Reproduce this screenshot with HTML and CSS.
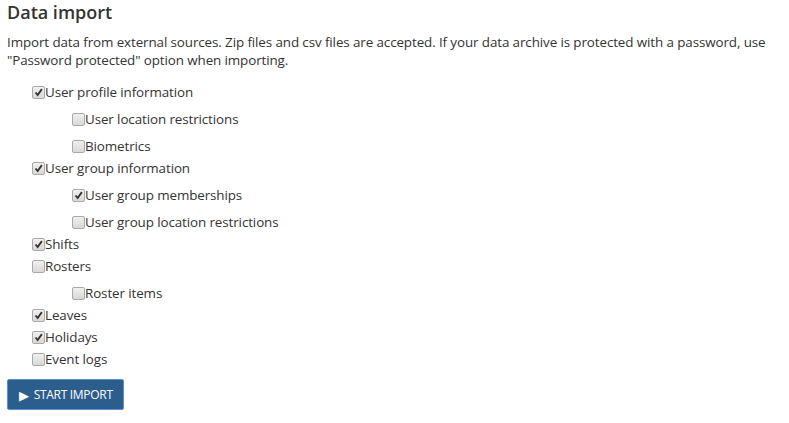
FILE: index.html
```html
<!DOCTYPE html>
<html>
<head>
<meta charset="utf-8">
<link rel="stylesheet" href="styles.css">
</head>
<body>
<div class="page">
  <h1 class="title">Data import</h1>
  <p class="intro">Import data from external sources. Zip files and csv files are accepted. If your data archive is protected with a password, use "Password protected" option when importing.</p>
  <ul class="opts">
    <li class="opt"><label class="row"><span class="box on"><svg viewBox="0 0 13 13"><path d="M3 6.5 L5.5 9.5 L10.5 2.5" /></svg></span>User profile information</label>
      <ul class="sub">
        <li class="opt"><label class="row"><span class="box"></span>User location restrictions</label></li>
        <li class="opt"><label class="row"><span class="box"></span>Biometrics</label></li>
      </ul>
    </li>
    <li class="opt"><label class="row"><span class="box on"><svg viewBox="0 0 13 13"><path d="M3 6.5 L5.5 9.5 L10.5 2.5" /></svg></span>User group information</label>
      <ul class="sub">
        <li class="opt"><label class="row"><span class="box on"><svg viewBox="0 0 13 13"><path d="M3 6.5 L5.5 9.5 L10.5 2.5" /></svg></span>User group memberships</label></li>
        <li class="opt"><label class="row"><span class="box"></span>User group location restrictions</label></li>
      </ul>
    </li>
    <li class="opt"><label class="row"><span class="box on"><svg viewBox="0 0 13 13"><path d="M3 6.5 L5.5 9.5 L10.5 2.5" /></svg></span>Shifts</label></li>
    <li class="opt"><label class="row"><span class="box"></span>Rosters</label>
      <ul class="sub">
        <li class="opt"><label class="row"><span class="box"></span>Roster items</label></li>
      </ul>
    </li>
    <li class="opt"><label class="row"><span class="box on"><svg viewBox="0 0 13 13"><path d="M3 6.5 L5.5 9.5 L10.5 2.5" /></svg></span>Leaves</label></li>
    <li class="opt"><label class="row"><span class="box on"><svg viewBox="0 0 13 13"><path d="M3 6.5 L5.5 9.5 L10.5 2.5" /></svg></span>Holidays</label></li>
    <li class="opt"><label class="row"><span class="box"></span>Event logs</label></li>
  </ul>
  <button class="btn"><span class="play">&#9654;</span>START IMPORT</button>
</div>
</body>
</html>
```

FILE: styles.css
```css
html, body {
  margin: 0;
  padding: 0;
  background: #ffffff;
}
body {
  font-family: "Open Sans", "Noto Sans", "Liberation Sans", sans-serif;
  color: #333333;
  font-size: 13px;
}
.page {
  padding: 0 7px;
}
.title {
  margin: 0;
  padding-top: 0;
  font-size: 18px;
  font-weight: 600;
  line-height: 24px;
  color: #333333;
}
.intro {
  margin: 9px 0 0 0;
  font-size: 13.4px;
  line-height: 18px;
  letter-spacing: -0.1px;
}
.opts {
  list-style: none;
  margin: 12px 0 0 0;
  padding: 0 0 0 25px;
}
.sub {
  list-style: none;
  margin: 0;
  padding: 0 0 0 40px;
}
.sub .opt {
  margin-top: 5px;
}
.row {
  display: flex;
  align-items: center;
  height: 22px;
  font-size: 13.4px;
  letter-spacing: -0.1px;
}
.box {
  box-sizing: border-box;
  width: 13px;
  height: 13px;
  border: 1px solid #a9a9a9;
  border-radius: 2px;
  background: linear-gradient(#f0f0f0, #d8d8d8);
  display: inline-flex;
  flex: none;
}
.box svg {
  width: 11px;
  height: 11px;
}
.box svg path {
  fill: none;
  stroke: #333333;
  stroke-width: 2.2;
}
.btn {
  margin-top: 9px;
  display: flex;
  align-items: center;
  height: 31px;
  width: 117px;
  padding: 0 0 0 11px;
  background: #2b5d8d;
  border: 1px solid #5a8fd6;
  border-radius: 2px;
  color: #ffffff;
  font-family: "Open Sans", "Noto Sans", "Liberation Sans", sans-serif;
  font-size: 12px;
  letter-spacing: -0.3px;
}
.play {
  font-size: 13px;
  margin-right: 5px;
}
```
